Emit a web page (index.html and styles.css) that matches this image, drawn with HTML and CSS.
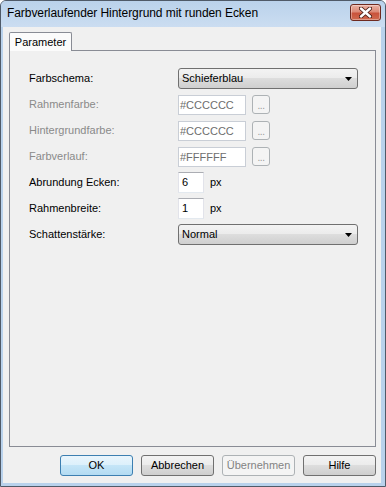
FILE: index.html
```html
<!DOCTYPE html>
<html lang="de">
<head>
<meta charset="utf-8">
<title>Farbverlaufender Hintergrund mit runden Ecken</title>
<link rel="stylesheet" href="styles.css">
</head>
<body>
<div class="window">
  <div class="titlebar">
    <span class="title">Farbverlaufender Hintergrund mit runden Ecken</span>
    <div class="close">
      <svg width="13" height="11" viewBox="0 0 13 11">
        <path d="M2 1.5L11 9.5M11 1.5L2 9.5" stroke="#4a1f18" stroke-width="4.2" stroke-linecap="round" fill="none"/>
        <path d="M2 1.5L11 9.5M11 1.5L2 9.5" stroke="#ffffff" stroke-width="2.4" stroke-linecap="round" fill="none"/>
      </svg>
    </div>
  </div>
  <div class="frame">
    <div class="client">
      <div class="tabs"><div class="tab">Parameter</div></div>
      <div class="panel">
        <div class="form">
          <span class="lbl">Farbschema:</span>
          <div class="combo"><span>Schieferblau</span><svg class="arrow" width="7" height="4" viewBox="0 0 7 4"><path d="M0 0H7L3.5 4Z" fill="#000"/></svg></div>

          <span class="lbl off">Rahmenfarbe:</span>
          <div class="pair"><div class="edit off">#CCCCCC</div><div class="dots">...</div></div>

          <span class="lbl off">Hintergrundfarbe:</span>
          <div class="pair"><div class="edit off">#CCCCCC</div><div class="dots">...</div></div>

          <span class="lbl off">Farbverlauf:</span>
          <div class="pair"><div class="edit off">#FFFFFF</div><div class="dots">...</div></div>

          <span class="lbl">Abrundung Ecken:</span>
          <div class="pair"><div class="edit num">6</div><span class="unit">px</span></div>

          <span class="lbl">Rahmenbreite:</span>
          <div class="pair"><div class="edit num">1</div><span class="unit">px</span></div>

          <span class="lbl">Schattenstärke:</span>
          <div class="combo"><span>Normal</span><svg class="arrow" width="7" height="4" viewBox="0 0 7 4"><path d="M0 0H7L3.5 4Z" fill="#000"/></svg></div>
        </div>
      </div>
      <div class="buttons">
        <div class="btn default">OK</div>
        <div class="btn">Abbrechen</div>
        <div class="btn disabled">Übernehmen</div>
        <div class="btn">Hilfe</div>
      </div>
    </div>
  </div>
</div>
</body>
</html>
```
FILE: styles.css
```css
* { box-sizing: border-box; }

html, body {
  margin: 0;
  padding: 0;
  background: #ffffff;
}

body {
  font-family: "Liberation Sans", Arial, sans-serif;
  font-size: 11px;
  color: #000000;
}

.window {
  width: 386px;
  height: 487px;
  border: 1px solid #4f5a68;
  border-radius: 6px 6px 0 0;
  background: #b9d2ec;
  display: flex;
  flex-direction: column;
  overflow: hidden;
}

.titlebar {
  height: 26px;
  flex: none;
  display: flex;
  justify-content: space-between;
  align-items: flex-start;
  background: linear-gradient(#bad2eb, #cbddf1);
}

.title {
  font-size: 12px;
  line-height: 15px;
  padding: 5px 0 0 6px;
  color: #000000;
  white-space: nowrap;
  letter-spacing: -0.07px;
}

.close {
  width: 31px;
  height: 17px;
  margin: 3px 4px 0 0;
  border: 1px solid #6e2a20;
  border-radius: 3px;
  background: linear-gradient(#eab1a4 0%, #dc8a77 45%, #c9533c 55%, #cf6a4f 100%);
  box-shadow: inset 0 0 0 1px rgba(255, 255, 255, 0.35);
  display: flex;
  align-items: center;
  justify-content: center;
}

.frame {
  flex: 1;
  display: flex;
  padding: 0 4px 3px 2px;
}

.client {
  flex: 1;
  background: #f0f0f0;
  display: flex;
  flex-direction: column;
  padding: 5px 5px 0 6px;
}

.tabs {
  display: flex;
  height: 19px;
  margin-bottom: -1px;
  position: relative;
  z-index: 1;
}

.tab {
  width: 63px;
  height: 19px;
  border: 1px solid #898c95;
  border-bottom: none;
  border-radius: 2px 2px 0 0;
  background: #fbfbfb;
  text-align: center;
  line-height: 18px;
}

.panel {
  height: 397px;
  border: 1px solid #898c95;
  background: #f0f0f0;
  padding: 17px 0 0 19px;
}

.form {
  display: grid;
  grid-template-columns: 149px auto;
  grid-auto-rows: 21px;
  row-gap: 5px;
  align-items: center;
}

.lbl {
  line-height: 13px;
  white-space: nowrap;
}

.lbl.off { color: #8a8a8a; }

.combo {
  width: 180px;
  height: 21px;
  border: 1px solid #707070;
  border-radius: 3px;
  background: linear-gradient(#f3f3f3 0%, #ebebeb 50%, #dddddd 50%, #cfcfcf 100%);
  display: flex;
  align-items: center;
  justify-content: space-between;
  padding: 0 5px 0 3px;
  line-height: 13px;
}

.arrow { display: block; }

.pair {
  display: flex;
  align-items: center;
  gap: 6px;
}

.edit {
  width: 68px;
  height: 20px;
  border: 1px solid #c9ced6;
  background: #ffffff;
  padding-left: 1px;
  line-height: 18px;
  color: #000000;
}

.edit.off { color: #6d6d6d; }

.edit.num {
  width: 26px;
  height: 21px;
  border-color: #abadb3 #e2e3ea #e3e9ef #e2e3ea;
  padding-left: 3px;
  line-height: 19px;
}

.dots {
  width: 18px;
  height: 19px;
  border: 1px solid #adb2b5;
  border-radius: 3px;
  background: #f4f4f4;
  color: #9a9a9a;
  text-align: center;
  line-height: 19px;
  font-size: 10px;
  letter-spacing: -0.5px;
}

.unit { line-height: 13px; }

.buttons {
  display: flex;
  justify-content: flex-end;
  gap: 8px;
  margin-top: 8px;
}

.btn {
  width: 73px;
  height: 21px;
  border: 1px solid #707070;
  border-radius: 3px;
  background: linear-gradient(#f3f3f3 0%, #ebebeb 50%, #dddddd 50%, #cfcfcf 100%);
  text-align: center;
  line-height: 19px;
}

.btn.default {
  border-color: #3c7fb1;
  background: linear-gradient(#e9f5fc 0%, #dbf0fb 50%, #c4e5f7 50%, #b3dbf2 100%);
}

.btn.disabled {
  border-color: #adb2b5;
  background: #f4f4f4;
  color: #838383;
}
```
